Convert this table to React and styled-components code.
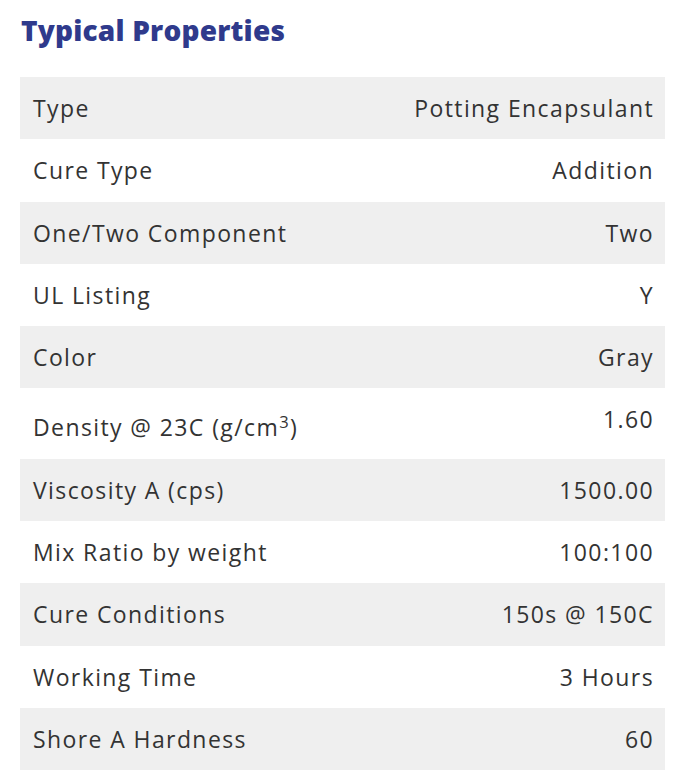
import React from 'react';
import styled, { createGlobalStyle } from 'styled-components';

const GlobalStyle = createGlobalStyle`
  body {
    margin: 0;
    background: #ffffff;
    font-family: "Open Sans", "Noto Sans", sans-serif;
  }
`;

const Section = styled.section`
  padding: 8px 13px 0 20px;
`;

const Title = styled.h2`
  margin: 0 0 25px 1px;
  font-family: "Open Sans", sans-serif;
  font-weight: 800;
  font-size: 28px;
  line-height: 44px;
  color: #2f3a8c;
  letter-spacing: 0.2px;
`;

const Table = styled.div`
  display: flex;
  flex-direction: column;
`;

const Row = styled.div`
  display: flex;
  justify-content: space-between;
  align-items: flex-start;
  padding: 16px 11px 16px 13px;
  background: ${props => (props.$shaded ? '#efefef' : '#ffffff')};
  color: #333333;
  font-size: 23px;
  line-height: 30.3px;
  letter-spacing: 1.4px;
`;

const Label = styled.span`
  padding-top: ${props => (props.$tall ? '8px' : '0')};
`;

const Value = styled.span`
  text-align: right;
`;

const Sup = styled.sup`
  font-size: 0.72em;
  line-height: 0;
  vertical-align: 0.5em;
`;

const properties = [
  { label: 'Type', value: 'Potting Encapsulant' },
  { label: 'Cure Type', value: 'Addition' },
  { label: 'One/Two Component', value: 'Two' },
  { label: 'UL Listing', value: 'Y' },
  { label: 'Color', value: 'Gray' },
  { label: <>Density @ 23C (g/cm<Sup>3</Sup>)</>, value: '1.60', tall: true },
  { label: 'Viscosity A (cps)', value: '1500.00' },
  { label: 'Mix Ratio by weight', value: '100:100' },
  { label: 'Cure Conditions', value: '150s @ 150C' },
  { label: 'Working Time', value: '3 Hours' },
  { label: 'Shore A Hardness', value: '60' },
];

const App = () => {
  return (
    <>
      <GlobalStyle />
      <Section>
        <Title>Typical Properties</Title>
        <Table>
          {properties.map((item, i) => (
            <Row key={i} $shaded={i % 2 === 0}>
              <Label $tall={item.tall}>{item.label}</Label>
              <Value>{item.value}</Value>
            </Row>
          ))}
        </Table>
      </Section>
    </>
  );
};

export default App;
